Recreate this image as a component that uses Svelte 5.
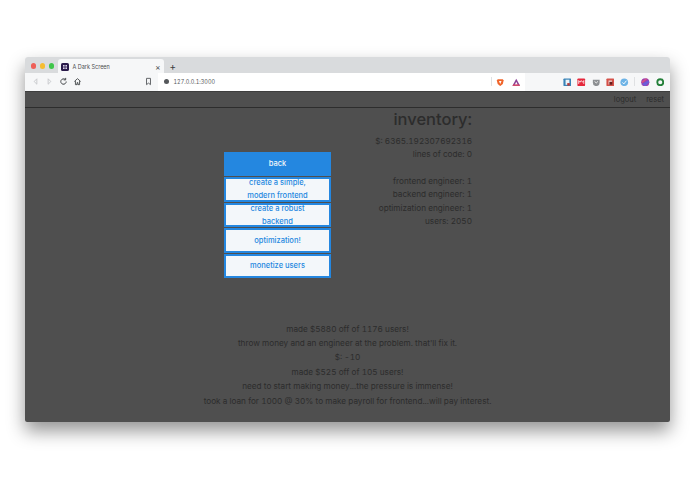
<script>
  const inventory = [
    '$: 6365.192307692316',
    'lines of code: 0',
    '',
    'frontend engineer: 1',
    'backend engineer: 1',
    'optimization engineer: 1',
    'users: 2050'
  ];
  const actions = [
    'create a simple, modern frontend',
    'create a robust backend',
    'optimization!',
    'monetize users'
  ];
  const log = [
    'made $5880 off of 1176 users!',
    "throw money and an engineer at the problem. that'll fix it.",
    '$: -10',
    'made $525 off of 105 users!',
    'need to start making money...the pressure is immense!',
    'took a loan for 1000 @ 30% to make payroll for frontend...will pay interest.'
  ];
</script>

<div class="window">
  <div class="tabstrip">
    <div class="lights">
      <span class="light red"></span>
      <span class="light yellow"></span>
      <span class="light green"></span>
    </div>
    <div class="tab">
      <svg class="favicon" viewBox="0 0 10 10">
        <rect width="10" height="10" rx="2" fill="#2a1a4a" />
        <rect x="2.5" y="2.5" width="2" height="2" fill="#d9d2ea" />
        <rect x="5.5" y="2.5" width="2" height="2" fill="#d9d2ea" />
        <rect x="2.5" y="5.5" width="2" height="2" fill="#d9d2ea" />
        <rect x="5.5" y="5.5" width="2" height="2" fill="#d9d2ea" />
      </svg>
      <span class="tab-title">A Dark Screen</span>
      <span class="tab-close">×</span>
    </div>
    <span class="new-tab">+</span>
  </div>

  <div class="toolbar">
    <div class="nav-icons">
      <svg viewBox="0 0 10 10" class="tool"><path d="M6.500 2 3.500 5l3 3z" fill="none" stroke="#c4c6c9" stroke-width="1" /></svg>
      <svg viewBox="0 0 10 10" class="tool"><path d="M3.500 2 6.500 5l-3 3z" fill="none" stroke="#c4c6c9" stroke-width="1" /></svg>
      <svg viewBox="0 0 10 10" class="tool"><path d="M8 5a3 3 0 1 1-1-2.200M7.400 1v2.200H5.200" fill="none" stroke="#44474a" stroke-width="1.100" /></svg>
      <svg viewBox="0 0 10 10" class="tool"><path d="M1.500 5 5 1.800 8.500 5M2.700 4.500V8.500h1.800V6.300h1V8.500h1.800V4.500" fill="none" stroke="#44474a" stroke-width="1" /></svg>
    </div>
    <svg viewBox="0 0 10 10" class="tool bookmark"><path d="M2.800 1.500h4.400v7L5 6.800 2.800 8.500z" fill="none" stroke="#55585b" stroke-width="1" /></svg>
    <div class="omnibox">
      <span class="info"></span>
      <span class="url">127.0.0.1:3000</span>
      <span class="omni-right">
        <span class="divider"></span>
        <svg viewBox="0 0 10 10" class="ext brave"><path d="M2 1.500h6l1 1.500-1 4L5 9.500 2 7 1 3z" fill="#f0642a" /><path d="M3.500 3.500h3L5 7z" fill="#fff" /></svg>
        <svg viewBox="0 0 10 10" class="ext tri"><path d="M5 1 9.500 9h-9z" fill="#8a3f96" /><path d="M5 4.500 6.800 7.800H3.200z" fill="#fff" /><path d="M.5 9h9L8.600 7.500H1.400z" fill="#e0405a" /></svg>
      </span>
    </div>
    <div class="extensions">
      <svg viewBox="0 0 10 10" class="ext"><rect x=".5" y=".5" width="9" height="9" rx="1" fill="#3a84b8" /><rect x="3" y="2" width="4.500" height="6" fill="#eef3f6" /><rect x="5" y="6" width="3" height="3" fill="#b43a3a" /></svg>
      <svg viewBox="0 0 10 10" class="ext"><rect x=".5" y=".5" width="9" height="9" rx="1" fill="#e5283c" /><path d="M2 7V3l1.500 2L5 3l1.500 2L8 3v4" fill="none" stroke="#fff" stroke-width=".9" /></svg>
      <svg viewBox="0 0 10 10" class="ext"><path d="M1 2h8v3.500a4 4 0 0 1-8 0z" fill="#8c8f92" /><path d="M3 4l2 1.800L7 4" fill="none" stroke="#fff" stroke-width="1" /></svg>
      <svg viewBox="0 0 10 10" class="ext"><rect x=".5" y=".5" width="9" height="9" rx="1" fill="#d5524a" /><path d="M3 3h4v4.500H3z" fill="#f4d9d6" /><rect x="4" y="4.500" width="3.500" height="3.500" fill="#6b1c1c" /></svg>
      <svg viewBox="0 0 10 10" class="ext"><circle cx="5" cy="5" r="4.500" fill="#6db3e6" /><path d="M2.800 5.200 4.500 7 7.500 3.200" fill="none" stroke="#fff" stroke-width="1.100" /></svg>
      <span class="ext-divider"></span>
      <svg viewBox="0 0 10 10" class="ext"><circle cx="5" cy="5" r="4.800" fill="#a23fb0" /><path d="M1 7 8.800 2.500 9.800 5 5 9.800z" fill="#6a5fd8" /><path d="M.8 4 6 .5 7.500 1 1.500 6z" fill="#d9577e" /></svg>
      <svg viewBox="0 0 10 10" class="ext"><circle cx="5" cy="5" r="3.500" fill="none" stroke="#24803a" stroke-width="2.200" /></svg>
    </div>
  </div>

  <div class="page">
    <nav class="topnav">
      <span>logout</span>
      <span>reset</span>
    </nav>

    <main class="game">
      <div class="board">
        <div class="actions">
          <button class="btn primary">back</button>
          {#each actions as label}
            <button class="btn">{label}</button>
          {/each}
        </div>
        <div class="inventory">
          <h2>inventory:</h2>
          {#each inventory as row}
            <p>{row}</p>
          {/each}
        </div>
      </div>

      <div class="log">
        {#each log as line}
          <p>{line}</p>
        {/each}
      </div>
    </main>
  </div>
</div>

<style>
  :global(body) {
    margin: 0;
    min-height: 494px;
    background: #fff;
    font-family: Inter, "Liberation Sans", sans-serif;
    font-variant-numeric: tabular-nums;
  }

  .window {
    width: 645px;
    height: 365px;
    margin: 0 0 0 25px;
    position: relative;
    top: 57px;
    display: flex;
    flex-direction: column;
    border-radius: 3px 3px 2px 2px;
    overflow: hidden;
    box-shadow: 0 9px 18px rgba(0, 0, 0, 0.42);
  }

  .tabstrip {
    height: 16px;
    flex: none;
    display: flex;
    align-items: flex-end;
    background: #d9dbdd;
  }

  .lights {
    display: flex;
    gap: 3.500px;
    align-self: center;
    padding: 2px 3.500px 0 5.500px;
  }

  .light {
    width: 5.500px;
    height: 5.500px;
    border-radius: 50%;
  }

  .red { background: #ee5f58; }
  .yellow { background: #f6bd30; }
  .green { background: #3fc64a; }

  .tab {
    width: 106px;
    height: 14.500px;
    display: flex;
    align-items: center;
    gap: 4px;
    box-sizing: border-box;
    padding: 3px 3px 0 3px;
    background: #f6f7f8;
    border-radius: 3px 3px 0 0;
  }

  .favicon {
    width: 8px;
    height: 8px;
    flex: none;
  }

  .tab-title {
    flex: 1;
    font-size: 5.500px;
    color: #4c4e50;
  }

  .tab-close {
    font-size: 8px;
    line-height: 8px;
    color: #44464a;
  }

  .new-tab {
    align-self: center;
    margin: 2px 0 0 6px;
    font-size: 10px;
    line-height: 10px;
    color: #3c3e41;
  }

  .toolbar {
    height: 17.500px;
    flex: none;
    display: flex;
    align-items: center;
    background: #f6f7f8;
    box-sizing: border-box;
    padding-left: 5.500px;
  }

  .tool {
    width: 9px;
    height: 9px;
    flex: none;
  }

  .nav-icons {
    display: flex;
    gap: 5.300px;
    width: 113px;
  }

  .bookmark {
    margin-right: 5px;
  }

  .omnibox {
    width: 367px;
    height: 100%;
    display: flex;
    align-items: center;
    background: #fff;
    box-sizing: border-box;
    padding: 0 4px 0 6px;
  }

  .info {
    width: 5px;
    height: 5px;
    border-radius: 50%;
    background: #55585b;
    margin-right: 5px;
  }

  .url {
    flex: 1;
    padding-top: 1px;
    font-size: 5.500px;
    color: #55585b;
  }

  .omni-right {
    display: flex;
    align-items: center;
    gap: 8px;
  }

  .omni-right .brave {
    margin-left: -4px;
  }

  .divider,
  .ext-divider {
    width: 1px;
    height: 9px;
    background: #dfe1e3;
  }

  .ext {
    width: 8.500px;
    height: 8.500px;
    flex: none;
  }

  .extensions {
    flex: 1;
    display: flex;
    align-items: center;
    justify-content: flex-end;
    gap: 5.800px;
    padding-right: 6px;
  }

  .page {
    flex: 1;
    display: flex;
    flex-direction: column;
    background: #4f4f4f;
    color: #2c2c2c;
    border-top: 1px solid #3e3e3e;
    min-height: 0;
  }

  .topnav {
    height: 15px;
    flex: none;
    display: flex;
    justify-content: flex-end;
    align-items: center;
    gap: 10px;
    padding-right: 6px;
    font-size: 7.500px;
    border-bottom: 1px solid #2d2d2d;
  }

  .game {
    flex: 1;
    display: flex;
    flex-direction: column;
  }

  .board {
    height: 214px;
    flex: none;
    display: flex;
    align-items: flex-start;
    padding-left: 199px;
  }

  .actions {
    width: 107px;
    display: flex;
    flex-direction: column;
    gap: 1px;
    padding-top: 44px;
  }

  .btn {
    height: 24.500px;
    flex: none;
    margin: 0;
    padding: 0 12px;
    display: flex;
    align-items: center;
    justify-content: center;
    box-sizing: border-box;
    border: 2px solid #2487e0;
    background: #f3f7fa;
    color: #2487e0;
    font-family: inherit;
    font-size: 7.500px;
    font-weight: 500;
    line-height: 13px;
    text-align: center;
    overflow: hidden;
  }

  .btn.primary {
    background: #2487e0;
    color: #f3f7fa;
  }

  .inventory {
    width: 141px;
    text-align: right;
    font-size: 8.200px;
    line-height: 13.400px;
  }

  .inventory h2 {
    margin: 1px 0 6px;
    font-size: 16.500px;
    font-weight: 500;
    line-height: 20px;
  }

  .inventory p {
    margin: 0;
    min-height: 13.400px;
  }

  .log {
    font-size: 8.200px;
    line-height: 14.400px;
    text-align: center;
  }

  .log p {
    margin: 0;
  }
</style>
